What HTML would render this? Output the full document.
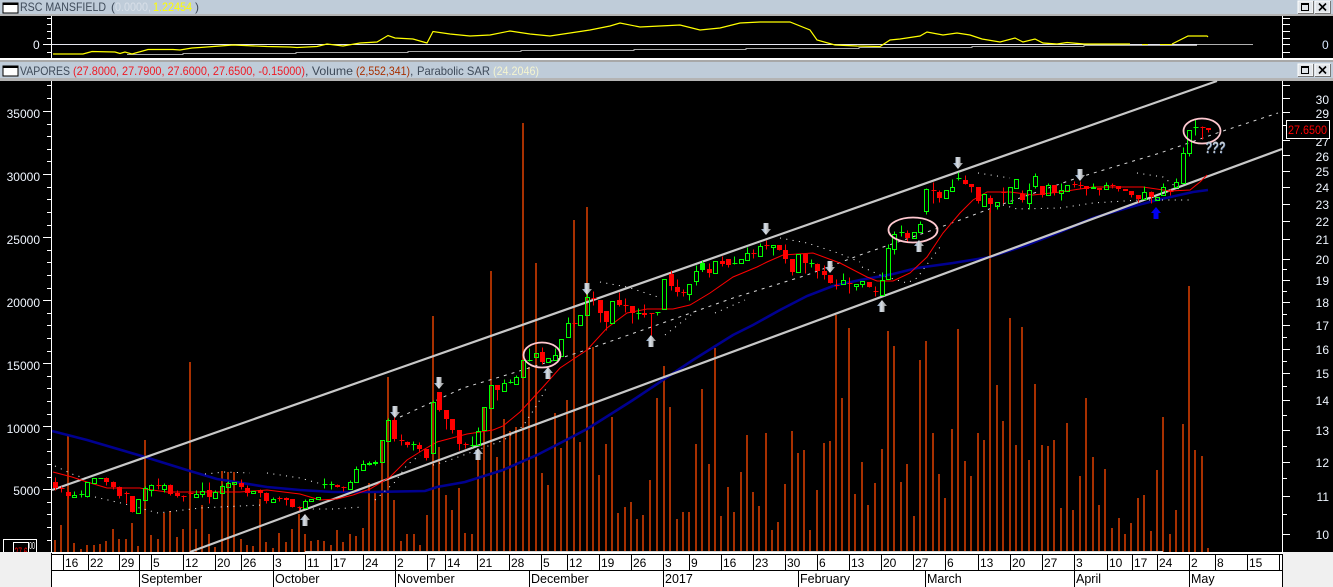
<!DOCTYPE html>
<html><head><meta charset="utf-8"><title>VAPORES</title>
<style>html,body{margin:0;padding:0;background:#000;overflow:hidden}svg{display:block}text{font-family:"Liberation Sans",sans-serif;font-size:12px}</style>
</head><body>
<svg xmlns="http://www.w3.org/2000/svg" width="1333" height="587" viewBox="0 0 1333 587">
<defs>
<linearGradient id="ag" x1="0" x2="1" y1="0" y2="0"><stop offset="0" stop-color="#7f9cc0"/><stop offset=".45" stop-color="#d8dde2"/><stop offset="1" stop-color="#8a8a8a"/></linearGradient>
<polygon id="up" points="0,0 5,6 2.5,6 2.5,12 -2.5,12 -2.5,6 -5,6" fill="url(#ag)"/>
<polygon id="dn" points="0,12 5,6 2.5,6 2.5,0 -2.5,0 -2.5,6 -5,6" fill="url(#ag)"/>
</defs>
<rect width="1333" height="587" fill="#000"/>

<!-- top pane -->
<rect width="1333" height="14" fill="#bfccd9"/>
<rect y="14" width="1333" height="2" fill="#b4b4b4"/>
<rect x="3" y="3" width="15" height="10" fill="#fff" stroke="#000" stroke-width="1"/>
<rect x="3" y="3" width="15" height="2" fill="#000"/>
<text x="20" y="11" fill="#3e4a59" textLength="86" lengthAdjust="spacingAndGlyphs">RSC MANSFIELD</text>
<text x="111" y="11" fill="#3e4a59">(</text>
<text x="115" y="11" fill="#d8dfe8" textLength="36" lengthAdjust="spacingAndGlyphs">0.0000,</text>
<text x="153" y="11" fill="#ffff00" textLength="39" lengthAdjust="spacingAndGlyphs">1.22454</text>
<text x="195" y="11" fill="#3e4a59">)</text>

<g shape-rendering="crispEdges" stroke="#fff" fill="none">
<path d="M51.5 16V58M47 18.5H51M47 24.5H51M47 31.5H51M47 38.5H51M43 44.5H51M47 52.5H51"/>
<path d="M1282.5 16V58M1283 18.5H1290M1283 24.5H1290M1283 31.5H1290M1283 38.5H1290M1283 44.5H1290M1283 52.5H1290"/>
</g>
<text x="33" y="49" fill="#f0f6ff">0</text>
<text x="1322" y="49" fill="#d8e8ff">0</text>
<path d="M52 44.5H1197" stroke="#e6e6f0" stroke-width="1" shape-rendering="crispEdges"/>
<path d="M1197 44.5H1253" stroke="#b0b0b0" stroke-width="1" shape-rendering="crispEdges"/>
<path d="M127 54.5H183V53.5H296V52.5H408V51.5H521V50.5H634V49.5H746V48.5H859V47.5H972V46.5H1084V45.5H1197" stroke="#a8a8a8" fill="none" shape-rendering="crispEdges"/>
<path d="M53 54L83 54 92 51.5 115 52 120 53.5 125 52 132 54 148 49.5 173 49.5 180 50 192 48 200 47.5 220 46 233 45 267 46.5 290 47 297 47.5 317 46.5 327 44 343 46 360 43 377 42 388 35.5 395 38 413 39 427 43 433 31.5 450 34 470 36 490 35 510 31 530 34 550 36 570 33 590 30 610 26 620 23 640 27 660 26 680 25 700 30 720 28 740 23 760 22 790 22 810 30 817 40 835 45 857 46 880 46.5 890 40 900 39 920 36 927 32 943 35 957 33 970 35 982 39 1000 42 1015 38 1023 42 1035 39 1043 43 1057 44 1067 42.5 1084 44 1130 44" fill="none" stroke="#ffff00" stroke-width="1.2"/>
<path d="M1142 44.5H1148M1160 44.5H1172" stroke="#ffff00" shape-rendering="crispEdges"/>
<path d="M1172 44L1188 36 1207 36 1208 37" fill="none" stroke="#ffff00" stroke-width="1.2"/>

<!-- separator -->
<rect y="58" width="1333" height="2" fill="#fff"/>
<rect y="60" width="1333" height="2" fill="#a8a8a8"/>
<rect y="62" width="1333" height="16" fill="#bfccd9"/>
<rect y="78" width="1333" height="3" fill="#b4b4b4"/>
<rect x="3" y="66" width="15" height="10" fill="#fff" stroke="#000"/>
<rect x="3" y="66" width="15" height="2" fill="#000"/>
<text x="20" y="75" fill="#3e4a59" textLength="50" lengthAdjust="spacingAndGlyphs">VAPORES</text>
<text x="73" y="75" fill="#ee1a24" textLength="232" lengthAdjust="spacingAndGlyphs">(27.8000, 27.7900, 27.6000, 27.6500, -0.15000)</text>
<text x="305" y="75" fill="#3e4a59" textLength="48" lengthAdjust="spacingAndGlyphs">, Volume</text>
<text x="356" y="75" fill="#a83000" textLength="54" lengthAdjust="spacingAndGlyphs">(2,552,341)</text>
<text x="410" y="75" fill="#3e4a59">,</text>
<text x="417" y="75" fill="#3e4a59" textLength="73" lengthAdjust="spacingAndGlyphs">Parabolic SAR</text>
<text x="493" y="75" fill="#f4f4d0" textLength="46" lengthAdjust="spacingAndGlyphs">(24.2046)</text>

<!-- window buttons -->
<g shape-rendering="crispEdges">
<g id="b1">
<rect x="1298" y="1" width="15" height="12" fill="#e2e6ea" stroke="#fff"/><path d="M1313.5 1V13.5H1298" stroke="#777" fill="none"/>
<rect x="1301.5" y="3.5" width="7" height="7" fill="none" stroke="#000"/><path d="M1301 4.5H1309" stroke="#000"/>
<rect x="1315" y="1" width="15" height="12" fill="#e2e6ea" stroke="#fff"/><path d="M1330.5 1V13.5H1315" stroke="#777" fill="none"/>
</g>
<g transform="translate(0,63)">
<rect x="1298" y="1" width="15" height="12" fill="#e2e6ea" stroke="#fff"/><path d="M1313.5 1V13.5H1298" stroke="#777" fill="none"/>
<rect x="1301.5" y="3.5" width="7" height="7" fill="none" stroke="#000"/><path d="M1301 4.5H1309" stroke="#000"/>
<rect x="1315" y="1" width="15" height="12" fill="#e2e6ea" stroke="#fff"/><path d="M1330.5 1V13.5H1315" stroke="#777" fill="none"/>
</g>
</g>
<path d="M1319 3.5L1326 10.5M1326 3.5L1319 10.5M1319 66.5L1326 73.5M1326 66.5L1319 73.5" stroke="#000" stroke-width="1.6"/>

<!-- volume bars -->
<path shape-rendering="crispEdges" stroke="#a83000" stroke-width="2" fill="none" d="M55 540V552M61 525V552M68 435V552M74 543V552M81 549V552M87 545V552M94 545V552M100 544V552M106 541V552M113 529V552M119 539V552M126 539V552M132 523V552M138 546V552M145 440V552M151 535V552M158 539V552M164 513V552M170 511V552M177 537V552M183 529V552M190 362V552M196 529V552M202 505V552M209 534V552M215 547V552M222 471V552M228 472V552M234 472V552M241 539V552M247 545V552M253 546V552M260 499V552M266 542V552M273 548V552M279 533V552M286 542V552M292 529V552M299 514V552M305 534V552M311 541V552M318 540V552M324 541V552M331 545V552M337 530V552M343 542V552M350 534V552M356 536V552M363 528V552M369 483V552M375 493V552M382 440V552M388 377V552M394 500V552M401 541V552M407 534V552M414 534V552M420 545V552M427 515V552M433 316V552M439 447V552M446 495V552M452 510V552M459 488V552M465 533V552M472 534V552M478 450V552M484 407V552M491 271V552M497 457V552M504 419V552M510 431V552M516 427V552M523 123V552M529 367V552M536 263V552M542 473V552M548 485V552M555 413V552M561 448V552M567 400V552M574 220V552M580 442V552M587 207V552M593 347V552M599 475V552M606 444V552M612 417V552M618 513V552M625 507V552M631 502V552M637 519V552M643 515V552M650 480V552M657 398V552M664 366V552M670 407V552M677 519V552M683 512V552M689 512V552M696 444V552M702 389V552M709 464V552M715 348V552M721 516V552M728 487V552M734 512V552M741 472V552M747 435V552M753 492V552M759 506V552M766 433V552M772 530V552M778 522V552M785 484V552M792 431V552M798 453V552M804 450V552M810 530V552M817 490V552M824 443V552M830 441V552M836 315V552M842 398V552M849 328V552M855 494V552M862 462V552M868 505V552M875 483V552M882 449V552M888 331V552M894 346V552M901 482V552M907 464V552M914 516V552M920 360V552M926 341V552M933 433V552M939 474V552M945 498V552M952 429V552M958 329V552M965 461V552M971 476V552M978 433V552M984 440V552M990 210V552M997 385V552M1003 421V552M1010 318V552M1016 445V552M1022 327V552M1029 460V552M1035 384V552M1042 445V552M1048 446V552M1054 440V552M1061 508V552M1067 423V552M1073 510V552M1080 476V552M1086 398V552M1093 457V552M1099 505V552M1105 469V552M1112 528V552M1119 518V552M1125 534V552M1131 523V552M1138 498V552M1144 495V552M1151 531V552M1157 470V552M1163 417V552M1170 534V552M1176 510V552M1183 424V552M1189 286V552M1195 450V552M1202 456V552M1208 548V552"/>

<!-- blue MA -->
<path fill="none" stroke="#000090" stroke-width="2.6" d="M52 431L87 440 145 457 190 471 217 479 267 487 300 490 333 492 370 492 425 491 437 487 465 482 503 470 537 455 570 438 587 429 603 419 633 400 660 382 693 360 733 335 753 325 780 310 807 296 833 286 860 280 893 274 917 268 953 263 990 257 1027 245 1060 232 1093 218 1127 208 1157 200 1193 192 1208 190"/>

<!-- channel lines -->
<path fill="none" stroke="#c8c8c8" stroke-width="2.2" d="M52 490L1217 81M190 552L1282 149"/>

<!-- dashed trend -->
<path fill="none" stroke="#d8d8d8" stroke-width="1" stroke-dasharray="3 5" d="M400 417L463 388 513 373 580 352 657 325 733 298 807 275 860 255 927 232 960 220 1000 205 1077 178 1160 153 1220 132 1278 113"/>

<!-- envelope dots -->
<g fill="none" stroke="#fff" stroke-width="1" stroke-dasharray="1 5.4">
<path d="M55 466L72 474 90 480"/>
<path d="M95 497L125 504 158 513 200 508 240 506 262 505"/>
<path d="M205 474L225 472 250 473"/>
<path d="M267 473L300 478 325 485"/>
<path d="M300 509L333 509 363 507"/>
<path d="M375 500L395 482 407 465 420 455"/>
<path d="M433 465L447 461 472 452 504 440 523 426 537 405 548 385"/>
<path d="M600 282L627 287 658 297"/>
<path d="M665 335L700 308M715 313L745 300"/>
<path d="M780 238L807 243 838 253 860 262"/>
<path d="M862 267L880 275 907 283 917 278 940 247"/>
<path d="M978 173L1010 178"/>
<path d="M1003 205L1017 209 1060 208 1093 203 1140 200 1190 200"/>
<path d="M1137 173L1163 177 1180 190"/>
</g>

<!-- red MA -->
<path fill="none" stroke="#ff0000" stroke-width="1" d="M53 472L72 477 87 482 107 488 140 488 145 489 167 492 200 492 240 492 267 490 300 494 320 500 337 499 353 495 370 489 390 477 407 460 423 450 437 442 467 434 493 430 503 426 520 412 543 387 560 368 587 350 607 328 627 313 647 309 673 309 690 305 710 293 733 277 757 267 767 262 783 255 813 253 840 263 867 277 877 281 893 281 910 273 927 257 943 233 960 213 973 200 987 192 1010 192 1033 195 1060 192 1093 187 1143 187 1170 191 1190 190 1200 182 1207 175"/>

<!-- red candles -->
<path shape-rendering="crispEdges" fill="none" stroke="#ff0000" transform="translate(.5,.5)" d="M55 477V490M61 486V492M59 488h5M68 490V498M106 477V485M113 481V489M119 486V498M126 491V503M124 493h5M132 496V512M158 478V489M156 485h5M170 484V495M177 490V497M183 495V501M181 496h5M190 491V497M188 493h5M209 482V503M241 479V489M247 485V496M260 489V497M266 492V503M279 496V501M277 498h5M286 497V505M292 499V507M299 506V510M297 507h5M337 484V487M343 486V491M341 487h5M394 417V441M401 434V445M399 440h5M407 441V447M419 442V452M426 449V460M439 392V411M446 410V429M452 419V433M459 430V450M465 442V448M463 444h5M497 385V400M542 347V364M574 320V327M572 323h5M593 291V305M591 298h5M600 300V322M606 311V330M619 292V306M625 298V312M623 305h5M632 306V323M644 304V317M651 313V335M649 313h5M671 270V290M677 279V296M683 289V296M681 292h5M709 263V277M722 256V266M728 259V267M753 249V258M751 253h5M766 240V249M764 245h5M779 245V250M785 244V263M792 259V275M805 254V273M817 263V278M824 265V279M830 275V283M836 279V289M834 285h5M849 277V293M847 283h5M869 282V287M875 286V296M873 291h5M907 230V241M933 182V203M931 190h5M939 190V202M965 175V184M971 184V192M978 187V203M990 195V212M1003 187V203M1001 192h5M1022 190V202M1042 186V197M1054 185V195M1074 181V187M1072 184h5M1080 181V188M1078 185h5M1086 186V195M1099 188V195M1112 183V188M1110 185h5M1118 186V191M1131 191V197M1138 195V202M1151 191V203M1170 189V195M1168 191h5M1202 126V139M1200 127h5M1208 128V132"/>
<path shape-rendering="crispEdges" fill="#ff0000" d="M53 482h5v6h-5zM66 492h5v4h-5zM104 478h5v4h-5zM111 482h5v5h-5zM117 487h5v9h-5zM130 496h5v16h-5zM168 485h5v9h-5zM175 493h5v3h-5zM207 490h5v7h-5zM239 483h5v4h-5zM245 488h5v5h-5zM258 490h5v3h-5zM264 493h5v8h-5zM284 498h5v2h-5zM290 499h5v8h-5zM335 485h5v2h-5zM392 420h5v19h-5zM405 442h5v3h-5zM417 445h5v4h-5zM424 449h5v9h-5zM437 392h5v18h-5zM444 410h5v9h-5zM450 419h5v11h-5zM457 430h5v14h-5zM495 385h5v5h-5zM540 352h5v10h-5zM598 300h5v13h-5zM604 311h5v11h-5zM617 300h5v5h-5zM630 306h5v7h-5zM642 313h5v2h-5zM669 274h5v12h-5zM675 287h5v5h-5zM707 269h5v4h-5zM720 261h5v3h-5zM726 259h5v6h-5zM777 245h5v5h-5zM783 250h5v9h-5zM790 259h5v13h-5zM803 254h5v9h-5zM815 264h5v7h-5zM822 271h5v4h-5zM828 275h5v8h-5zM867 282h5v5h-5zM905 233h5v5h-5zM937 192h5v6h-5zM963 180h5v4h-5zM969 184h5v3h-5zM976 187h5v14h-5zM988 198h5v6h-5zM1020 194h5v6h-5zM1040 186h5v9h-5zM1052 185h5v8h-5zM1084 186h5v3h-5zM1097 188h5v2h-5zM1116 186h5v3h-5zM1123 189h5v2h-5zM1129 191h5v4h-5zM1136 195h5v4h-5zM1149 192h5v5h-5zM1206 128h5v2h-5z"/>

<!-- green candles -->
<path shape-rendering="crispEdges" fill="none" stroke="#00ff00" transform="translate(.5,.5)" d="M74 491V495M72 495h4v2h-4zM81 490V497M79 494h5M85 482h4v14h-4zM87 496V497M92 478h4v5h-4zM98 478h5M136 499h4v14h-4zM143 488h4v12h-4zM145 486V488M149 485h4v5h-4zM151 484V485M151 490V496M162 485h4v4h-4zM164 483V485M164 489V492M194 494h4v3h-4zM196 490V494M200 491h4v3h-4zM202 482V491M202 494V497M213 492h4v6h-4zM215 490V492M220 486h4v7h-4zM222 484V486M226 483h4v4h-4zM228 481V483M232 482h4v2h-4zM251 491h4v2h-4zM271 499h4v3h-4zM273 497V499M303 501h4v7h-4zM305 499V501M309 499h4v2h-4zM316 497h4v2h-4zM324 478V488M322 484h5M331 481V489M329 484h5M348 482h4v7h-4zM350 480V482M354 469h4v13h-4zM356 466V469M361 464h4v6h-4zM363 460V464M367 463h4v1h-4zM369 461V465M373 462h4v1h-4zM375 460V465M380 440h4v22h-4zM386 420h4v21h-4zM388 418V420M413 441V450M411 444h5M431 402h4v51h-4zM433 400V402M472 436V447M470 445h5M476 431h4v14h-4zM478 427V431M482 407h4v23h-4zM489 385h4v23h-4zM502 383h4v8h-4zM504 379V383M510 379V383M508 382h5M514 377h4v7h-4zM516 375V377M521 360h4v17h-4zM529 348V361M527 360h5M534 353h4v4h-4zM546 358h4v4h-4zM553 355h4v5h-4zM555 348V355M559 339h4v17h-4zM566 323h4v14h-4zM568 317V323M578 315h4v10h-4zM585 297h4v18h-4zM587 293V297M610 301h4v22h-4zM638 308V319M636 313h5M657 312V315M655 312h5M662 279h4v30h-4zM687 284h4v10h-4zM689 294V300M694 271h4v10h-4zM696 265V271M696 281V285M713 261h4v12h-4zM734 256V264M732 263h5M739 259h4v4h-4zM745 253h4v7h-4zM747 247V253M758 246h4v10h-4zM760 243V246M771 245h4v2h-4zM773 247V255M796 254h4v18h-4zM811 259V267M809 263h5M841 280h4v4h-4zM843 273V280M854 284h4v2h-4zM856 286V290M860 281h4v3h-4zM862 284V287M880 280h4v15h-4zM882 272V280M886 248h4v31h-4zM888 244V248M892 234h4v15h-4zM894 231V234M894 249V254M901 225V236M899 232h5M912 232h4v6h-4zM918 224h4v8h-4zM920 221V224M924 189h4v22h-4zM926 188V189M926 211V214M944 190h4v8h-4zM950 187h4v4h-4zM952 179V187M958 172V180M956 178h5M982 194h4v12h-4zM995 202h4v4h-4zM997 206V209M1008 187h4v16h-4zM1014 179h4v9h-4zM1027 190h4v13h-4zM1029 183V190M1029 203V209M1033 176h4v10h-4zM1035 173V176M1035 186V188M1046 185h4v10h-4zM1048 183V185M1059 190h4v3h-4zM1061 183V190M1061 193V200M1065 185h4v6h-4zM1091 187h4v1h-4zM1093 183V187M1104 185h4v4h-4zM1106 182V185M1142 192h4v7h-4zM1144 186V192M1155 197h4v3h-4zM1161 187h4v8h-4zM1163 183V187M1174 182h4v5h-4zM1176 178V182M1181 153h4v30h-4zM1183 147V153M1187 130h4v23h-4zM1189 153V156M1195 119V135M1193 127h5"/>
<rect x="700" y="263" width="5" height="7" fill="#00ff00" shape-rendering="crispEdges"/>
<path d="M702.5 261V272" stroke="#00ff00" shape-rendering="crispEdges"/>

<!-- ellipses -->
<g fill="none" stroke="#ffc8d0" stroke-width="1.8">
<ellipse cx="542" cy="355" rx="18.5" ry="12.5"/>
<ellipse cx="913" cy="230" rx="24.5" ry="12.5"/>
<ellipse cx="1202" cy="131" rx="18.5" ry="12.5"/>
</g>

<!-- arrows -->
<use href="#up" x="305" y="514"/><use href="#up" x="478" y="448"/><use href="#up" x="548" y="367"/><use href="#up" x="651" y="335"/><use href="#up" x="882" y="300"/><use href="#up" x="919" y="240"/>
<use href="#dn" x="395" y="406"/><use href="#dn" x="439" y="377"/><use href="#dn" x="587" y="283"/><use href="#dn" x="766" y="223"/><use href="#dn" x="830" y="261"/><use href="#dn" x="958" y="157"/><use href="#dn" x="1080" y="169"/>
<polygon points="1156,207 1161,213 1158.5,213 1158.5,219 1153.5,219 1153.5,213 1151,213" fill="#0000f0"/>

<text x="1205.5" y="153.5" fill="#4a6a9a" font-weight="bold" font-style="italic" textLength="20" lengthAdjust="spacingAndGlyphs" style="font-size:17px">???</text>
<text x="1205" y="153" fill="#c4ccd4" font-weight="bold" font-style="italic" textLength="20" lengthAdjust="spacingAndGlyphs" style="font-size:17px">???</text>

<!-- left axis -->
<g shape-rendering="crispEdges" stroke="#fff" fill="none">
<path d="M51.5 81V552M47 85.5H51M47 98.5H51M43 111.5H51M47 124.5H51M47 136.5H51M47 149.5H51M47 161.5H51M43 174.5H51M47 187.5H51M47 199.5H51M47 212.5H51M47 225.5H51M43 237.5H51M47 250.5H51M47 262.5H51M47 275.5H51M47 288.5H51M43 300.5H51M47 313.5H51M47 325.5H51M47 338.5H51M47 351.5H51M43 363.5H51M47 376.5H51M47 388.5H51M47 401.5H51M47 414.5H51M43 426.5H51M47 439.5H51M47 451.5H51M47 464.5H51M47 477.5H51M43 489.5H51M47 502.5H51M47 514.5H51M47 527.5H51M47 540.5H51"/>
<path d="M1282.5 81V552M1283 85.5H1290M1283 98.5H1290M1283 112.5H1290M1283 125.5H1290M1283 140.5H1290M1283 155.5H1290M1283 171.5H1290M1283 187.5H1290M1283 204.5H1290M1283 221.5H1290M1283 239.5H1290M1283 259.5H1290M1283 269.5H1287M1283 280.5H1290M1283 291.5H1287M1283 302.5H1290M1283 314.5H1287M1283 325.5H1290M1283 337.5H1287M1283 349.5H1290M1283 361.5H1287M1283 373.5H1290M1283 386.5H1287M1283 400.5H1290M1283 415.5H1287M1283 430.5H1290M1283 446.5H1287M1283 462.5H1290M1283 478.5H1287M1283 496.5H1290M1283 514.5H1287M1283 534.5H1290"/>
</g>
<g fill="#f0f6ff" text-anchor="end">
<text x="40" y="118">35000</text><text x="40" y="181">30000</text><text x="40" y="244">25000</text><text x="40" y="307">20000</text><text x="40" y="370">15000</text><text x="40" y="433">10000</text><text x="40" y="495">5000</text>
<text x="1329" y="104">30</text><text x="1329" y="118">29</text><text x="1329" y="146">27</text><text x="1329" y="161">26</text><text x="1329" y="176">25</text><text x="1329" y="192">24</text><text x="1329" y="209">23</text><text x="1329" y="226">22</text><text x="1329" y="244">21</text><text x="1329" y="264">20</text><text x="1329" y="285">19</text><text x="1329" y="307">18</text><text x="1329" y="330">17</text><text x="1329" y="354">16</text><text x="1329" y="378">15</text><text x="1329" y="405">14</text><text x="1329" y="435">13</text><text x="1329" y="467">12</text><text x="1329" y="501">11</text><text x="1329" y="539">10</text>
</g>

<!-- price tag -->
<rect x="1286.5" y="120.5" width="43" height="18" fill="#000" stroke="#fff"/>
<text x="1288" y="134" fill="#ff0000" textLength="39" lengthAdjust="spacingAndGlyphs">27.6500</text>

<!-- lower-left tag -->
<rect x="3.5" y="539.5" width="33" height="14" fill="#000" stroke="#fff"/>
<text x="29" y="549" fill="#fff" style="font-size:10px" textLength="6" lengthAdjust="spacingAndGlyphs">00</text>
<rect x="13.5" y="542.5" width="15" height="12" fill="#000" stroke="#fff"/>
<text x="14.5" y="556" fill="#ff0000" textLength="13" lengthAdjust="spacingAndGlyphs">27.6</text>

<!-- bottom axis -->
<rect x="305" y="551" width="858" height="1" fill="#d8d8d8"/>
<rect x="0" y="552" width="1333" height="35" fill="#f0f0f0"/>
<rect x="52" y="552" width="1231" height="35" fill="#fff"/>
<path shape-rendering="crispEdges" fill="none" stroke="#000" d="M51.5 553V587M1282.5 554V587M52 554.5H1283M52 570.5H1283M63.5 555V570M88.5 555V570M119.5 555V570M139.5 555V587M151.5 555V570M183.5 555V570M215.5 555V570M241.5 555V570M273.5 555V587M305.5 555V570M331.5 555V570M363.5 555V570M395.5 555V587M427.5 555V570M445.5 555V570M477.5 555V570M509.5 555V570M529.5 570V587M541.5 555V570M567.5 555V570M599.5 555V570M631.5 555V570M663.5 555V587M689.5 555V570M721.5 555V570M753.5 555V570M785.5 555V570M798.5 570V587M817.5 555V570M849.5 555V570M881.5 555V570M913.5 555V570M925.5 570V587M945.5 555V570M978.5 555V570M1010.5 555V570M1042.5 555V570M1074.5 555V587M1107.5 555V570M1132.5 555V570M1157.5 555V570M1189.5 555V587M1215.5 555V570M1247.5 555V570M1279.5 555V570"/>
<g fill="#000">
<text x="65" y="567">16</text><text x="90" y="567">22</text><text x="121" y="567">29</text><text x="153" y="567">5</text><text x="185" y="567">12</text><text x="217" y="567">20</text><text x="243" y="567">26</text><text x="275" y="567">3</text><text x="307" y="567">11</text><text x="333" y="567">17</text><text x="365" y="567">24</text><text x="397" y="567">2</text><text x="429" y="567">7</text><text x="447" y="567">14</text><text x="479" y="567">21</text><text x="511" y="567">28</text><text x="543" y="567">5</text><text x="569" y="567">12</text><text x="601" y="567">19</text><text x="633" y="567">26</text><text x="665" y="567">3</text><text x="691" y="567">9</text><text x="723" y="567">16</text><text x="755" y="567">23</text><text x="787" y="567">30</text><text x="819" y="567">6</text><text x="851" y="567">13</text><text x="883" y="567">20</text><text x="915" y="567">27</text><text x="947" y="567">6</text><text x="980" y="567">13</text><text x="1012" y="567">20</text><text x="1044" y="567">27</text><text x="1076" y="567">3</text><text x="1109" y="567">10</text><text x="1134" y="567">17</text><text x="1159" y="567">24</text><text x="1191" y="567">2</text><text x="1217" y="567">8</text><text x="1249" y="567">15</text>
<text x="141" y="583" style="font-size:12.5px">September</text><text x="275" y="583" style="font-size:12.5px">October</text><text x="397" y="583" style="font-size:12.5px">November</text><text x="531" y="583" style="font-size:12.5px">December</text><text x="665" y="583" style="font-size:12.5px">2017</text><text x="800" y="583" style="font-size:12.5px">February</text><text x="927" y="583" style="font-size:12.5px">March</text><text x="1076" y="583" style="font-size:12.5px">April</text><text x="1191" y="583" style="font-size:12.5px">May</text>
</g>
</svg>
</body></html>
